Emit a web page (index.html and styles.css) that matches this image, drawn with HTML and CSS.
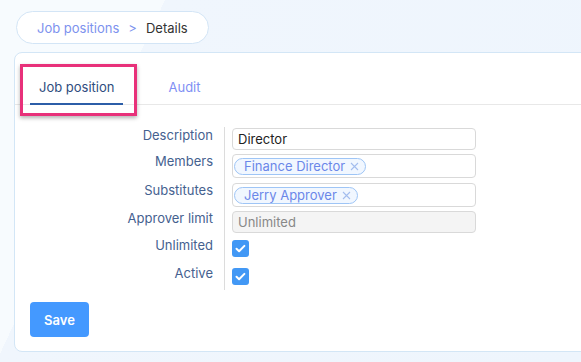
FILE: index.html
```html
<!DOCTYPE html>
<html lang="en">
<head>
    <meta charset="UTF-8">
    <meta name="viewport" content="width=device-width, initial-scale=1.0">
    <title>Job position details</title>
    <link rel="stylesheet" href="styles.css">
</head>
<body>
    <div class="page">
        <nav class="breadcrumb">
            <a href="#">Job positions</a>
            <span class="sep">&gt;</span>
            <span class="current">Details</span>
        </nav>

        <div class="card">
            <div class="tabs">
                <a class="tab active" href="#">Job position</a>
                <a class="tab" href="#">Audit</a>
            </div>
            <div class="highlight"></div>

            <form class="form">
                <label class="label">Description</label>
                <div class="control"><input class="input" type="text" value="Director"></div>

                <label class="label">Members</label>
                <div class="control">
                    <div class="input tags">
                        <span class="chip">Finance Director
                            <svg class="x" viewBox="0 0 9 9" width="9" height="9"><path d="M1 1l7 7M8 1l-7 7" stroke="#a4bdee" stroke-width="1.1"/></svg>
                        </span>
                    </div>
                </div>

                <label class="label">Substitutes</label>
                <div class="control">
                    <div class="input tags">
                        <span class="chip">Jerry Approver
                            <svg class="x" viewBox="0 0 9 9" width="9" height="9"><path d="M1 1l7 7M8 1l-7 7" stroke="#a4bdee" stroke-width="1.1"/></svg>
                        </span>
                    </div>
                </div>

                <label class="label">Approver limit</label>
                <div class="control"><input class="input" type="text" value="Unlimited" disabled></div>

                <label class="label">Unlimited</label>
                <div class="control"><span class="check"><svg viewBox="0 0 17 17" width="17" height="17"><path d="M4.5 8.8l2.6 2.5 5.3-5.4" fill="none" stroke="#fff" stroke-width="2" stroke-linecap="round" stroke-linejoin="round"/></svg></span></div>

                <label class="label">Active</label>
                <div class="control"><span class="check"><svg viewBox="0 0 17 17" width="17" height="17"><path d="M4.5 8.8l2.6 2.5 5.3-5.4" fill="none" stroke="#fff" stroke-width="2" stroke-linecap="round" stroke-linejoin="round"/></svg></span></div>
            </form>

            <button class="btn" type="button">Save</button>
        </div>
    </div>
</body>
</html>
```

FILE: styles.css
```css
* {
    box-sizing: border-box;
}

body {
    margin: 0;
    font-family: Inter, "Noto Sans", sans-serif;
    font-size: 13px;
    line-height: 16px;
    background: linear-gradient(115deg, #f7fbfe 0%, #f7fbfe 22%, #f0f6fd 22%, #eef5fd 100%);
    overflow: hidden;
}

.page {
    padding: 11px 0 0 14px;
    height: 362px;
}

.breadcrumb {
    display: inline-flex;
    align-items: center;
    height: 33px;
    margin-left: 2px;
    padding: 0 20px;
    background: #fff;
    border: 1px solid #d3e5f6;
    border-radius: 17px;
}

.breadcrumb a {
    color: #7d92ee;
    text-decoration: none;
}

.breadcrumb .sep {
    color: #7d92ee;
    margin: 0 9px;
}

.breadcrumb .current {
    color: #333;
}

.card {
    position: relative;
    margin-top: 8px;
    margin-right: -20px;
    height: 300px;
    background: #fff;
    border: 1px solid #d3e6f6;
    border-radius: 8px;
    padding: 0 0 0 15px;
}

.tabs {
    display: flex;
    gap: 36px;
    margin-left: -15px;
    padding-left: 15px;
    border-bottom: 1px solid #e8e8e8;
}

.tab {
    padding: 26px 9px 8px;
    margin-bottom: -1px;
    color: #7f90f4;
    text-decoration: none;
    border-bottom: 2px solid transparent;
}

.tab.active {
    color: #2f4d7e;
    border-bottom-color: #2c5ea8;
}

.highlight {
    position: absolute;
    left: 5px;
    top: 11px;
    width: 117px;
    height: 52px;
    border: 3px solid #e8317a;
    box-shadow: 0 2px 4px rgba(0, 0, 0, 0.3);
}

.form {
    display: grid;
    grid-template-columns: 195px 251px;
    grid-template-rows: 26px 29px 28px 27px 28px 25px;
    margin-top: 21px;
    padding-top: 1px;
}

.label {
    text-align: right;
    padding-right: 11px;
    color: #45618f;
    border-right: 1px solid #dcdcdc;
}

.control {
    padding-left: 7px;
}

.input {
    display: block;
    width: 244px;
    height: 22px;
    margin-top: 1px;
    padding: 0 5px;
    font-family: inherit;
    font-size: 13px;
    color: #222;
    background: #fff;
    border: 1px solid #d9d9d9;
    border-radius: 4px;
    outline: none;
}

.input:disabled {
    background: #f4f4f4;
    color: #888;
}

.tags {
    display: flex;
    align-items: center;
    height: 24px;
    padding: 0 1px;
}

.chip {
    display: inline-flex;
    align-items: center;
    height: 17px;
    padding: 0 6px 0 9px;
    color: #6b87e9;
    background: #f1f7ff;
    border: 1px solid #9ec5f6;
    border-radius: 9px;
    line-height: 15px;
}

.chip .x {
    display: block;
    margin-left: 5px;
}

.check {
    display: block;
    width: 17px;
    height: 17px;
    margin-top: 3px;
    background: #4298f5;
    border-radius: 3px;
}

.check svg {
    display: block;
}

.btn {
    display: block;
    margin-top: 12px;
    width: 59px;
    height: 35px;
    font-family: inherit;
    font-size: 13px;
    font-weight: 600;
    color: #fff;
    background: #4499ff;
    border: none;
    border-radius: 4px;
    cursor: pointer;
}
```
